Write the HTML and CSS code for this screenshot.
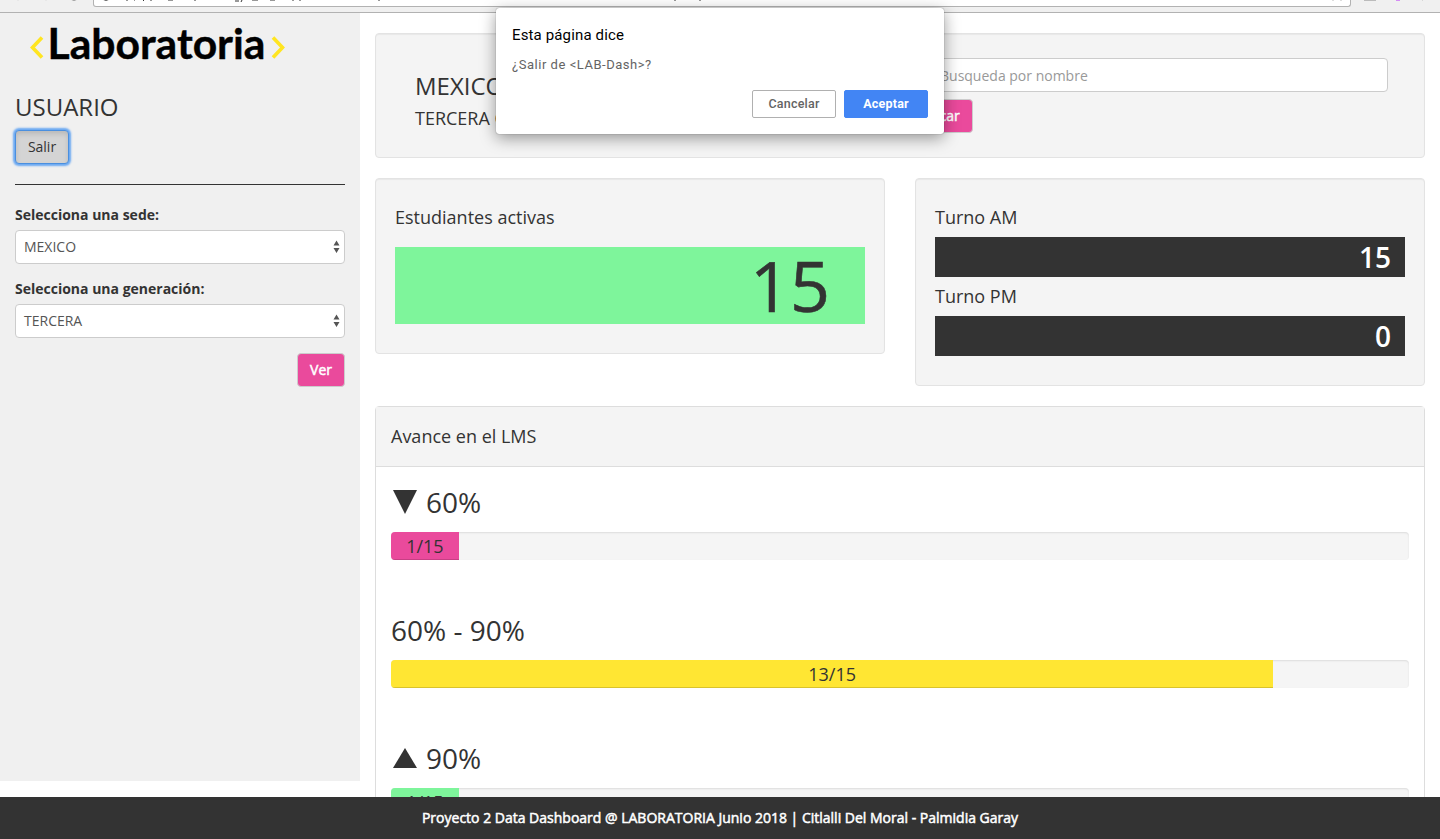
FILE: index.html
```html
<!DOCTYPE html>
<html lang="es">
<head>
<meta charset="utf-8">
<title>LAB-Dash</title>
<link rel="stylesheet" href="styles.css">
</head>
<body>
<div class="toolbar">
  <svg class="toolbar-art" width="1440" height="7" viewBox="0 0 1440 7">
    <path d="M17 0h2M45 0h2" stroke="#ddd"/>
    <path d="M70 -1q4 3 8 0" stroke="#999" fill="none"/>
    <path d="M102 -1q4 3 8 0" stroke="#555" fill="none"/>
    <path d="M126 0h2M134 0h1M144 0l-1 1M151 0v1M168 0h5M195 0v1M235 1h4M242 0l-1 2M252 0h6M270 0h5M293 0v1M300 0v1M379 0v1M675 0v1M700 0v1" stroke="#333" fill="none"/>
    <path d="M1332 0h2M1340 0h2M1364 .5h12M1422 0h1" stroke="#bbb"/>
    <path d="M1396 .5h4" stroke="#d58cf5"/>
  </svg>
  <div class="address"></div>
</div>
<div class="page">
  <aside class="sidebar">
    <svg class="logo" width="270" height="40" viewBox="0 0 270 40">
      <path d="M16 14.500L6.500 24.500l9.500 10M247 14.500l9.500 10-9.500 10" fill="none" stroke="#ffe521" stroke-width="3.600"/>
      <text x="21.500" y="36" class="logo-text" textLength="218" lengthAdjust="spacingAndGlyphs">Laboratoria</text>
    </svg>
    <h3 class="user">USUARIO</h3>
    <button class="btn btn-exit">Salir</button>
    <hr class="rule">
    <label class="label">Selecciona una sede:</label>
    <div class="select"><span>MEXICO</span><svg width="7" height="14" viewBox="0 0 7 14"><path d="M.5 5.500L3.500 .5 6.500 5.500zM.5 8l3 5 3-5z" fill="#555"/></svg></div>
    <label class="label">Selecciona una generación:</label>
    <div class="select"><span>TERCERA</span><svg width="7" height="14" viewBox="0 0 7 14"><path d="M.5 5.500L3.500 .5 6.500 5.500zM.5 8l3 5 3-5z" fill="#555"/></svg></div>
    <button class="btn btn-pink btn-view">Ver</button>
  </aside>
  <main class="main">
    <section class="card intro">
      <div class="intro-title">
        <h3>MEXICO</h3>
        <h4>TERCERA GENERACIÓN</h4>
      </div>
      <div class="search">
        <input class="search-input" placeholder="Busqueda por nombre">
        <button class="btn btn-pink btn-search">Buscar</button>
      </div>
    </section>
    <div class="row">
      <section class="card stat">
        <h4>Estudiantes activas</h4>
        <div class="big-number">15</div>
      </section>
      <section class="card stat shifts">
        <h4>Turno AM</h4>
        <div class="shift">15</div>
        <h4>Turno PM</h4>
        <div class="shift">0</div>
      </section>
    </div>
    <section class="panel">
      <header class="panel-head">Avance en el LMS</header>
      <div class="panel-body">
        <h2><svg width="27" height="23" viewBox="0 0 27 23"><path d="M2 0h24L14 24z" fill="#333"/></svg>60%</h2>
        <div class="progress"><div class="bar pink" style="width:6.667%">1/15</div></div>
        <h2>60% - 90%</h2>
        <div class="progress"><div class="bar yellow" style="width:86.667%">13/15</div></div>
        <h2><svg width="27" height="23" viewBox="0 0 27 23"><path d="M2 22h24L14 2z" fill="#333"/></svg>90%</h2>
        <div class="progress"><div class="bar green" style="width:6.667%">1/15</div></div>
      </div>
    </section>
  </main>
</div>
<footer class="footer">Proyecto 2 Data Dashboard @ LABORATORIA Junio 2018 | Citlalli Del Moral - Palmidia Garay</footer>
<div class="dialog">
  <div class="dialog-title">Esta página dice</div>
  <div class="dialog-text">¿Salir de &lt;LAB-Dash&gt;?</div>
  <div class="dialog-actions">
    <button class="dialog-btn">Cancelar</button>
    <button class="dialog-btn primary">Aceptar</button>
  </div>
</div>
</body>
</html>
```
FILE: styles.css
```css
* { box-sizing: border-box; }
body {
  margin: 0;
  height: 839px;
  overflow: hidden;
  position: relative;
  background: #fff;
  color: #333;
  font: 14px/20px "Open Sans", sans-serif;
}
h2, h3, h4 { margin: 0; font-weight: 400; }
h3 { font-size: 24px; line-height: 26px; }
h4 { font-size: 18px; line-height: 20px; }
.toolbar {
  position: relative;
  height: 13px;
  padding-left: 93px;
  background: #f0f0f0;
  border-bottom: 1px solid #b2b2b2;
}
.address {
  width: 1258px;
  height: 7px;
  background: #fff;
  border: 1px solid #b2b2b2;
  border-top: 0;
  border-radius: 0 0 3px 3px;
}
.toolbar-art { position: absolute; left: 0; top: 0; }
.page { display: flex; align-items: flex-start; height: 784px; overflow: hidden; }
.sidebar {
  display: flex;
  flex-direction: column;
  align-items: stretch;
  width: 360px;
  height: 768px;
  padding: 10px 15px 0;
  background: #f0f0f0;
}
.logo { width: 270px; margin-left: 11px; overflow: visible; }
.logo-text { font: 700 42.500px Lato, sans-serif; fill: #000; stroke: #000; stroke-width: .4px; }
.user { margin-top: 31px; }
.btn {
  height: 34px;
  padding: 0 12px;
  border: 1px solid #ccc;
  border-radius: 4px;
  font: 14px/20px "Open Sans", sans-serif;
}
.btn-exit {
  align-self: flex-start;
  width: 54px;
  margin-top: 10px;
  padding: 0;
  color: #333;
  background: #d4d4d4;
  border-color: #4a8fdf;
  box-shadow: inset 0 3px 5px rgba(0, 0, 0, .125), 0 0 2px 2px #6aa8f2;
}
.btn-pink { color: #fff; background: #ea4a9c; -webkit-text-stroke: .5px #fff; }
.btn-view { align-self: flex-end; width: 48px; padding: 0; }
.btn-search { margin-left: -25px; width: 71px; padding: 0; }
.rule { width: 100%; margin: 20px 0; border: 0; border-top: 1px solid #333; }
.label { margin-bottom: 5px; font-weight: 700; }
.select {
  display: flex;
  align-items: center;
  justify-content: space-between;
  height: 34px;
  margin-bottom: 15px;
  padding: 0 4px 0 8px;
  color: #555;
  background: #fff;
  border: 1px solid #ccc;
  border-radius: 4px;
}
.main { flex: 1; padding: 20px 15px 0; }
.card {
  background: #f4f4f4;
  border: 1px solid #e3e3e3;
  border-radius: 4px;
  box-shadow: inset 0 1px 1px rgba(0, 0, 0, .05);
}
.intro { display: flex; height: 125px; margin-bottom: 20px; }
.intro-title { width: 514px; padding: 39px 0 0 39px; }
.intro-title h4 { margin-top: 9px; }
.search { display: flex; flex-direction: column; align-items: flex-start; gap: 7px; padding: 24px 36px 0 37px; flex: 1; }
.search-input {
  width: 100%;
  height: 34px;
  padding: 6px 12px;
  border: 1px solid #ccc;
  border-radius: 4px;
  font: 14px/20px "Open Sans", sans-serif;
}
.search-input::placeholder { color: #999; }
.row { display: grid; grid-template-columns: 1fr 1fr; gap: 30px; align-items: start; }
.stat { height: 176px; padding: 28px 19px 0; }
.shifts { height: 208px; }
.big-number {
  height: 77px;
  margin-top: 20px;
  padding-right: 35px;
  background: #7ef59b;
  text-align: right;
  font-size: 70px;
  line-height: 77px;
  -webkit-text-stroke: .6px #333;
}
.shift {
  height: 40px;
  margin: 10px 0 9px;
  padding-right: 14px;
  color: #fff;
  background: #333;
  text-align: right;
  font-size: 28px;
  font-weight: 600;
  line-height: 40px;
}
.panel { height: 500px; margin-top: 20px; border: 1px solid #ddd; border-radius: 4px; }
.panel-head {
  height: 60px;
  padding: 0 15px;
  background: #f4f4f4;
  border-bottom: 1px solid #ddd;
  font-size: 18px;
  line-height: 59px;
}
.panel-body { padding: 20px 15px; }
.panel-body h2 { display: flex; align-items: flex-start; gap: 8px; height: 31px; margin-bottom: 14px; font-size: 28px; line-height: 31px; }
.panel-body h2 svg { margin-top: 3px; overflow: visible; }
.progress {
  height: 28px;
  margin-bottom: 55px;
  overflow: hidden;
  background: #f5f5f5;
  border-radius: 4px;
  box-shadow: inset 0 1px 2px rgba(0, 0, 0, .1);
}
.bar { height: 28px; text-align: center; font-size: 18px; line-height: 29px; box-shadow: inset 0 -1px 0 rgba(0, 0, 0, .15); }
.pink { background: #ea4a9c; }
.yellow { background: #ffe633; }
.green { background: #7ef59b; }
.footer { height: 42px; background: #333; color: #fff; text-align: center; line-height: 42px; -webkit-text-stroke: .5px #fff; }
.dialog {
  position: absolute;
  left: 496px;
  top: 8px;
  width: 448px;
  height: 126px;
  padding: 17px 16px 16px;
  background: #fff;
  border-radius: 3px;
  box-shadow: 0 0 1px rgba(0, 0, 0, .6), 0 4px 16px rgba(0, 0, 0, .4);
  font-family: Roboto, sans-serif;
}
.dialog-title { color: #000; font-size: 15px; letter-spacing: .14px; }
.dialog-text { margin-top: 10px; color: #646464; font-size: 13px; letter-spacing: .53px; }
.dialog-actions { display: flex; justify-content: flex-end; gap: 8px; margin-top: 15px; }
.dialog-btn {
  width: 84px;
  height: 28px;
  padding: 0 0 2px;
  color: #646464;
  background: #fff;
  border: 1px solid #b0b0b0;
  border-radius: 2px;
  font: 500 12.500px Roboto, sans-serif;
  letter-spacing: .2px;
}
.primary { color: #fff; background: #4285f4; border-color: #4285f4; font-weight: 700; }
```
